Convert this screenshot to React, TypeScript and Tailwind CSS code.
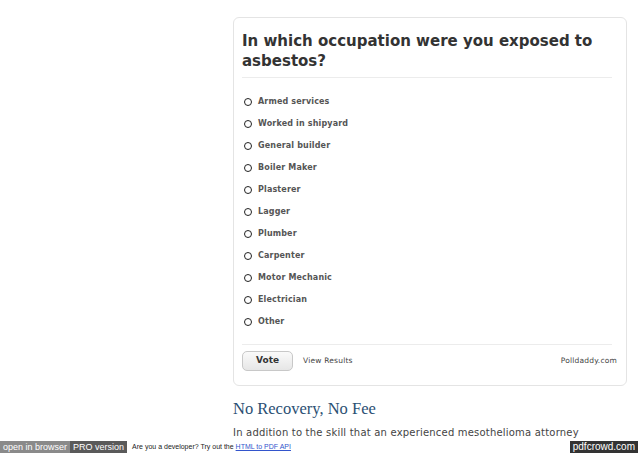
const options = [
  "Armed services",
  "Worked in shipyard",
  "General builder",
  "Boiler Maker",
  "Plasterer",
  "Lagger",
  "Plumber",
  "Carpenter",
  "Motor Mechanic",
  "Electrician",
  "Other",
];

export default function App() {
  return (
    <div className="relative h-[453px] w-[638px] overflow-hidden bg-white">
      <div className="ml-[233px] flex w-[394px] flex-col pt-[17px]">
        {/* poll card */}
        <div className="rounded-[6px] border border-[#e4e4e4] px-[8px] pb-[14px] pt-[13px] font-['DejaVu_Sans',sans-serif]">
          <h2 className="text-[15px] font-bold leading-[20px] text-[#333]">
            In which occupation were you exposed to asbestos?
          </h2>
          <div className="mt-[6px] mr-[6px] h-px bg-[#ececec]" />
          <ul className="flex flex-col pt-[13px]">
            {options.map((o) => (
              <li key={o} className="flex h-[22px] items-center gap-[6px] pl-[2px]">
                <span className="h-[8px] w-[8px] rounded-full border-[1.5px] border-[#222]" />
                <span className="text-[8px] font-bold tracking-[0.15px] text-[#555]">{o}</span>
              </li>
            ))}
          </ul>
          <div className="mt-[11px] mr-[6px] h-px bg-[#ececec]" />
          <div className="mt-[6px] flex items-center pr-[1px]">
            <button className="h-[20px] w-[51px] rounded-[5px] border border-[#c8c8c8] bg-gradient-to-b from-[#fafafa] to-[#e6e6e6] text-[9px] font-bold text-[#333]">
              Vote
            </button>
            <span className="ml-[10px] text-[7.5px] tracking-[0.2px] text-[#444]">View Results</span>
            <span className="ml-auto text-[7.5px] tracking-[0.2px] text-[#444]">Polldaddy.com</span>
          </div>
        </div>
        <h3 className="mt-[13px] font-['Liberation_Serif',serif] text-[16.5px] leading-[20px] text-[#2b4f73]">
          No Recovery, No Fee
        </h3>
        <p className="mt-[6px] font-['DejaVu_Sans',sans-serif] text-[10px] tracking-[0.2px] text-[#444]">
          In addition to the skill that an experienced mesothelioma attorney
        </p>
      </div>
      {/* pdfcrowd footer bar */}
      <div className="absolute bottom-0 left-0 flex h-[12px] w-full items-center font-['Liberation_Sans',sans-serif]">
        <span className="flex h-full items-center bg-[#8a8a8a] px-[3px] text-[9px] leading-none text-white">open in browser</span>
        <span className="flex h-full items-center bg-[#5a5a5a] px-[3px] text-[9px] leading-none text-white">PRO version</span>
        <span className="ml-[5px] text-[7px] text-[#222]">
          Are you a developer? Try out the <span className="text-[#3355cc] underline">HTML to PDF API</span>
        </span>
        <span className="ml-auto flex h-full items-center bg-[#333] px-[3px] text-[10px] leading-none text-white">pdfcrowd.com</span>
      </div>
    </div>
  );
}
